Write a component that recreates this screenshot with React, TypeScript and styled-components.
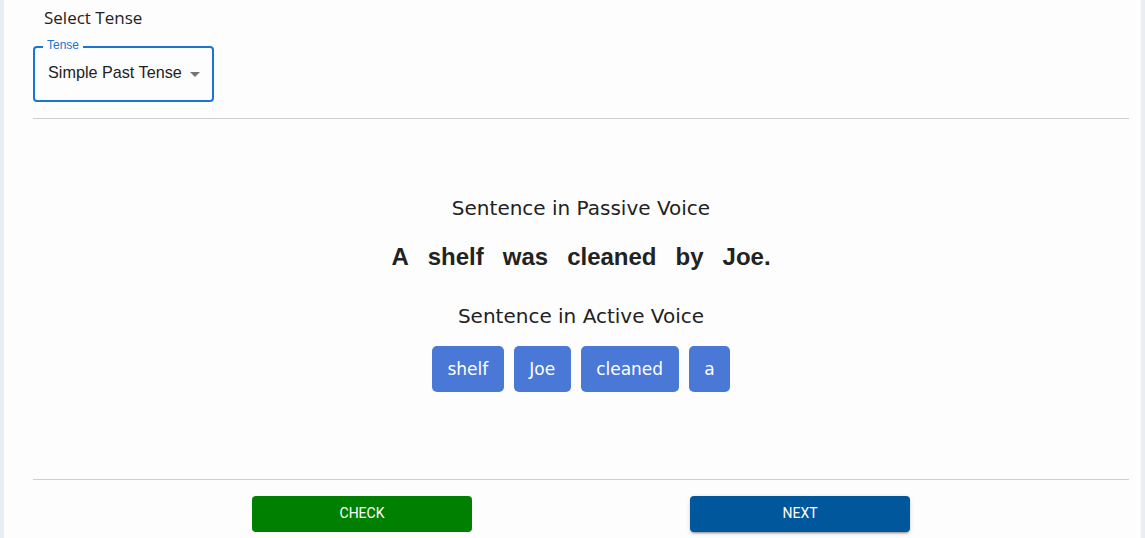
import React from "react";
import styled, { createGlobalStyle } from "styled-components";

const GlobalStyle = createGlobalStyle`
  html, body {
    margin: 0;
    padding: 0;
    background: #e8eef3;
  }
  * {
    box-sizing: border-box;
  }
`;

const Panel = styled.div`
  margin: 0 4px;
  min-height: 538px;
  background: #fdfdfd;
  padding: 8px 12px 0 29px;
  font-family: "DejaVu Sans", sans-serif;
  color: #222;
`;

const SectionTitle = styled.div`
  padding-left: 11px;
  font-family: "Open Sans", sans-serif;
  font-size: 17px;
  line-height: 20px;
  color: #222;
`;

const SelectBox = styled.div`
  position: relative;
  margin-top: 18px;
  width: 181px;
  height: 56px;
  border: 2px solid #1976d2;
  border-radius: 4px;
  display: flex;
  align-items: center;
  padding: 0 12px 0 13px;
  font-family: "Liberation Sans", Arial, sans-serif;
`;

const FloatLabel = styled.span`
  position: absolute;
  top: -10px;
  left: 8px;
  padding: 0 4px;
  background: #fdfdfd;
  font-size: 12px;
  line-height: 14px;
  color: #1976d2;
`;

const SelectValue = styled.span`
  flex: 1;
  font-size: 16.2px;
  color: #222;
  margin-top: -3px;
`;

const Caret = styled.span`
  width: 0;
  height: 0;
  border-left: 5px solid transparent;
  border-right: 5px solid transparent;
  border-top: 5px solid #757575;
`;

const Divider = styled.hr<{ $top: number }>`
  margin: ${(p) => p.$top}px 0 0;
  border: 0;
  border-top: 1px solid #cfcfcf;
  height: 0;
`;

const Exercise = styled.div`
  display: flex;
  flex-direction: column;
  align-items: center;
  padding-top: 77px;
  height: 360px;
`;

const Heading = styled.div<{ $gap: number }>`
  margin-top: ${(p) => p.$gap}px;
  font-size: 20px;
  line-height: 24px;
  color: #222;
`;

const Sentence = styled.div`
  margin-top: 22px;
  display: flex;
  gap: 19px;
  font-family: "Liberation Sans", Arial, sans-serif;
  font-weight: bold;
  font-size: 24px;
  line-height: 30px;
  color: #222;
`;

const ChipRow = styled.div`
  margin-top: 18px;
  display: flex;
  gap: 10px;
`;

const Chip = styled.button`
  height: 46px;
  padding: 0 15.5px;
  border: 0;
  border-radius: 5px;
  background: #4a78d6;
  color: #fff;
  font-family: "DejaVu Sans", sans-serif;
  font-size: 17px;
  cursor: pointer;
`;

const ActionBar = styled.div`
  margin: 16px auto 0;
  width: 876px;
  display: grid;
  grid-template-columns: 1fr 1fr;
  justify-items: center;
`;

const ActionButton = styled.button<{ $color: string; $raised?: boolean }>`
  width: 220px;
  height: 36px;
  border: 0;
  border-radius: 4px;
  padding: 0 0 2px;
  background: ${(p) => p.$color};
  color: #fff;
  font-family: Roboto, sans-serif;
  font-size: 14px;
  font-weight: 400;
  text-transform: uppercase;
  box-shadow: ${(p) =>
    p.$raised
      ? "0 3px 1px -2px rgba(0,0,0,0.2), 0 2px 2px 0 rgba(0,0,0,0.14), 0 1px 5px 0 rgba(0,0,0,0.12)"
      : "none"};
  cursor: pointer;
`;

const passive = ["A", "shelf", "was", "cleaned", "by", "Joe."];
const words = ["shelf", "Joe", "cleaned", "a"];

export default function App() {
  return (
    <>
      <GlobalStyle />
      <Panel>
        <SectionTitle>Select Tense</SectionTitle>
        <SelectBox>
          <FloatLabel>Tense</FloatLabel>
          <SelectValue>Simple Past Tense</SelectValue>
          <Caret />
        </SelectBox>
        <Divider $top={16} />
        <Exercise>
          <Heading $gap={0}>Sentence in Passive Voice</Heading>
          <Sentence>
            {passive.map((w, i) => (
              <span key={i}>{w}</span>
            ))}
          </Sentence>
          <Heading $gap={32}>Sentence in Active Voice</Heading>
          <ChipRow>
            {words.map((w) => (
              <Chip key={w}>{w}</Chip>
            ))}
          </ChipRow>
        </Exercise>
        <Divider $top={0} />
        <ActionBar>
          <ActionButton $color="#008000">Check</ActionButton>
          <ActionButton $color="#01579b" $raised>
            Next
          </ActionButton>
        </ActionBar>
      </Panel>
    </>
  );
}
